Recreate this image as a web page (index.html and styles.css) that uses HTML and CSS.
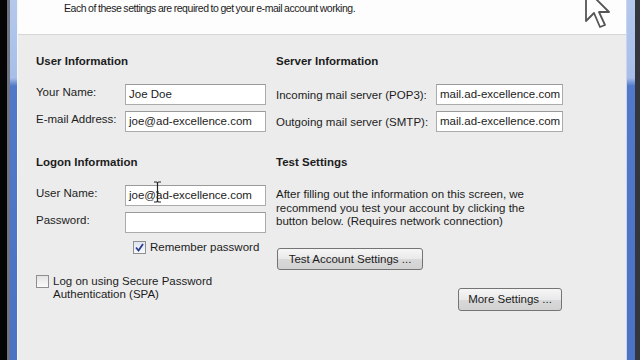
FILE: index.html
```html
<!DOCTYPE html>
<html lang="en">
<head>
  <meta charset="UTF-8">
  <title>Add New E-mail Account</title>
  <link rel="stylesheet" href="styles.css">
</head>
<body>

<div class="screen">
  <div class="edge-black"></div>
  <div class="edge-gray"></div>
  <div class="frame frame-left"></div>

  <div class="window">
    <div class="header">
      <p>Each of these settings are required to get your e-mail account working.</p>
    </div>

    <div class="body">
      <div class="col col-left">
        <h3>User Information</h3>
        <div class="field">
          <label>Your Name:</label>
          <div class="input">Joe Doe</div>
        </div>
        <div class="field">
          <label>E-mail Address:</label>
          <div class="input">joe@ad-excellence.com</div>
        </div>

        <h3 class="second">Logon Information</h3>
        <div class="field">
          <label>User Name:</label>
          <div class="input">joe@ad-excellence.com</div>
        </div>
        <div class="field">
          <label>Password:</label>
          <div class="input"></div>
        </div>
        <div class="check remember">
          <span class="box checked">
            <svg width="9" height="9" viewBox="0 0 9 9"><path d="M1 4.5 L3.5 7.5 L8 1" fill="none" stroke="#2a3f8f" stroke-width="1.8"/></svg>
          </span>
          <span>Remember password</span>
        </div>
        <div class="check spa">
          <span class="box"></span>
          <span>Log on using Secure Password<br>Authentication (SPA)</span>
        </div>
      </div>

      <div class="col col-right">
        <h3>Server Information</h3>
        <div class="field">
          <label>Incoming mail server (POP3):</label>
          <div class="input">mail.ad-excellence.com</div>
        </div>
        <div class="field">
          <label>Outgoing mail server (SMTP):</label>
          <div class="input">mail.ad-excellence.com</div>
        </div>

        <h3 class="second">Test Settings</h3>
        <p class="note">After filling out the information on this screen, we recommend you test your account by clicking the button below. (Requires network connection)</p>
        <button class="btn test">Test Account Settings ...</button>
        <div class="more-row">
          <button class="btn more">More Settings ...</button>
        </div>
      </div>
    </div>

    <!-- mouse pointers seen in the capture -->
    <svg class="arrow" width="30" height="44" viewBox="0 0 15 22">
      <path d="M1 1 L1 17 L5 13 L8 20 L10.5 19 L7.5 12.5 L12.5 12.5 Z" fill="#fff" stroke="#555" stroke-width="0.9" stroke-linejoin="round"/>
    </svg>
    <svg class="ibeam" width="9" height="22" viewBox="0 0 9 22">
      <path d="M1 1 H3.5 Q4.5 1 4.5 3 V19 Q4.5 21 3.5 21 H1 M8 1 H5.5 Q4.5 1 4.5 3 M4.5 19 Q4.5 21 5.5 21 H8 M3 11 H6" fill="none" stroke="#222" stroke-width="1.2"/>
    </svg>
  </div>

  <div class="frame frame-right"></div>
  <div class="edge-dark"></div>
</div>

</body>
</html>
```

FILE: styles.css
```css
html, body {
  margin: 0;
  padding: 0;
  background: #000;
}

.screen {
  display: flex;
  width: 640px;
  height: 360px;
  overflow: hidden;
  font-family: "Liberation Sans", Arial, sans-serif;
  font-size: 11.5px;
  color: #1c1c1c;
}

.edge-black {
  width: 7px;
  background: #050505;
}

.edge-gray {
  width: 3px;
  background: #6f7380;
}

.frame {
  width: 7px;
  background: linear-gradient(to bottom, #b4c8ec 0, #a7bfe8 78px, #5079c9 86px, #4a73c4 100%);
}

.frame-left {
  border-right: 1px solid #f4f6fb;
}

.frame-right {
  width: 8px;
  border-left: 1px solid #c9d6ee;
}

.edge-dark {
  width: 5px;
  background: #33363d;
}

.window {
  position: relative;
  flex: 1;
  display: flex;
  flex-direction: column;
  background: #ececec;
}

.header {
  height: 34px;
  background: #fdfdfd;
  border-bottom: 1px solid #d6d6d6;
}

.header p {
  margin: 1px 0 0 46px;
  font-size: 10.5px;
  letter-spacing: -0.45px;
  word-spacing: -0.5px;
  line-height: 14px;
}

.body {
  display: grid;
  grid-template-columns: 240px 1fr;
  padding: 19px 0 0 18px;
}

.col {
  display: flex;
  flex-direction: column;
}

h3 {
  margin: 0 0 16px;
  font-size: 11.5px;
  line-height: 14px;
  font-weight: bold;
}

h3.second {
  margin-top: 17px;
}

.field {
  display: flex;
  align-items: center;
  height: 21px;
  margin-bottom: 6px;
}

.field label {
  width: 89px;
}

.col-left .field label {
  margin-bottom: 5px;
}

.col-right .field label {
  width: 160px;
}

.input {
  box-sizing: border-box;
  width: 141px;
  height: 21px;
  padding: 0 3px;
  line-height: 19px;
  background: #fff;
  border: 1px solid #ababab;
  border-top-color: #9a9a9a;
  white-space: nowrap;
}

.col-right .input {
  width: 127px;
}

.check {
  display: flex;
  align-items: flex-start;
  gap: 4px;
  line-height: 13px;
}

.box {
  box-sizing: border-box;
  display: flex;
  align-items: center;
  justify-content: center;
  width: 13px;
  height: 13px;
  background: linear-gradient(to bottom, #e4e4e4, #fafafa);
  border: 1px solid #8f8f8f;
}

.box.checked {
  background: linear-gradient(to bottom, #dfe4f2, #f8f9fc);
}

.remember {
  margin: 2px 0 0 97px;
}

.spa {
  margin: 21px 0 0 0;
}

.note {
  margin: 3px 0 0 0;
  width: 270px;
  line-height: 13.5px;
}

.btn {
  box-sizing: border-box;
  height: 22px;
  padding: 0 7px;
  font-family: inherit;
  font-size: 11.5px;
  color: #1c1c1c;
  background: linear-gradient(to bottom, #f6f6f6 0, #e9e9e9 50%, #d9d9d9 51%, #d2d2d2 100%);
  border: 1px solid #747474;
  border-radius: 3px;
}

.test {
  align-self: flex-start;
  width: 146px;
  margin: 19px 0 0 1px;
}

.more-row {
  display: flex;
  justify-content: flex-end;
  width: 286px;
  margin-top: 18px;
}

.more {
  width: 104px;
  height: 23px;
}

.arrow {
  position: absolute;
  left: 566px;
  top: -13px;
}

.ibeam {
  position: absolute;
  left: 135px;
  top: 181px;
}
```
